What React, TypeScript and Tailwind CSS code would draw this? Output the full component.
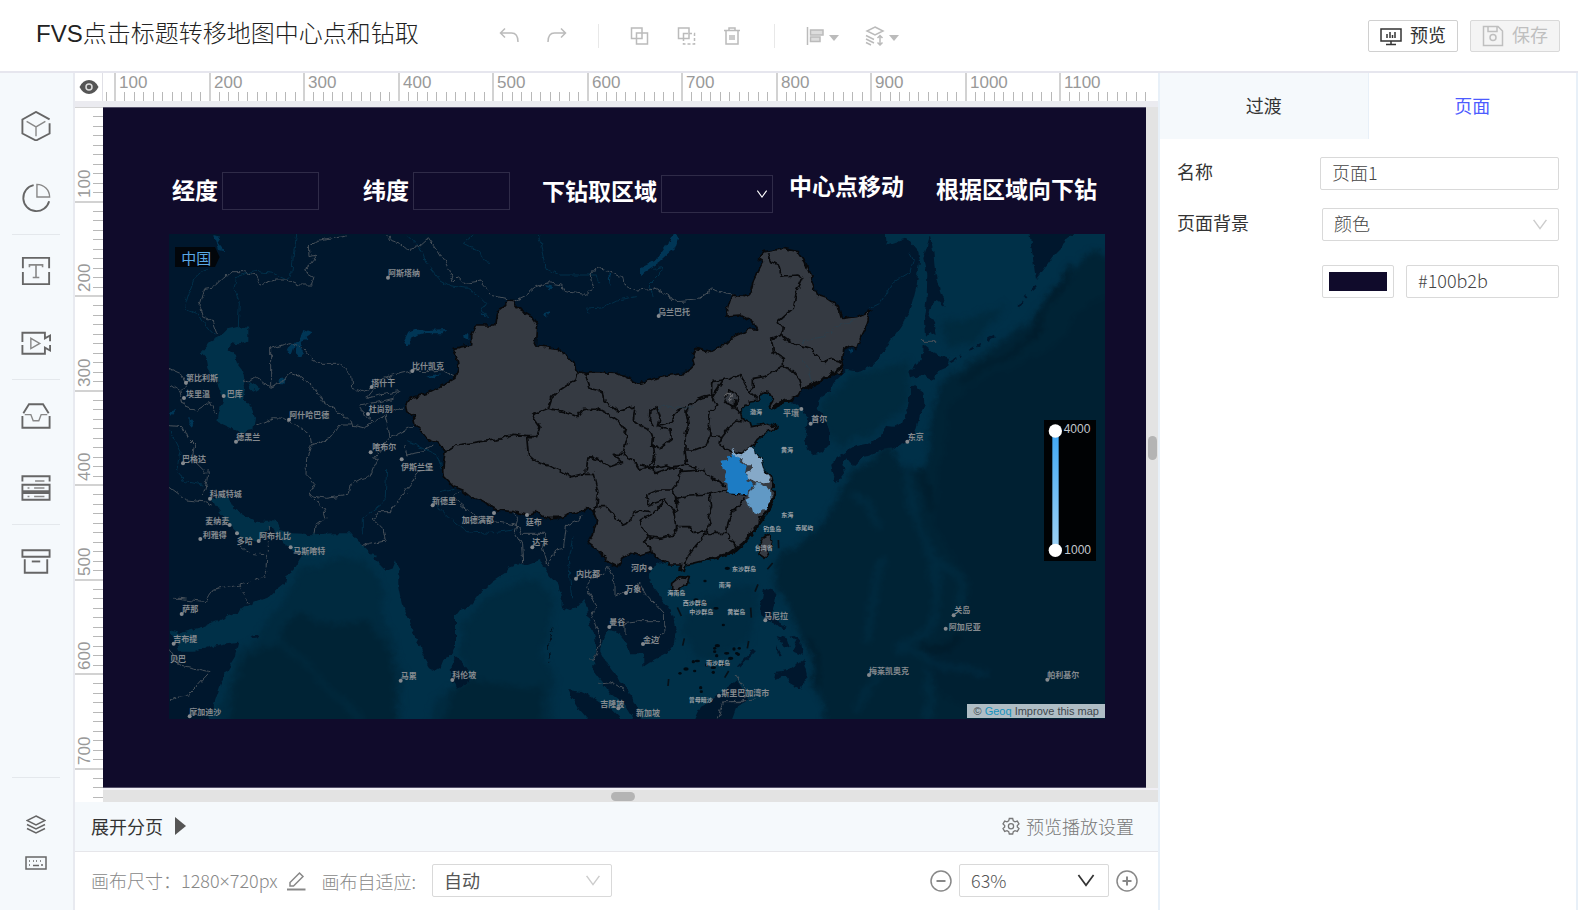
import { useState, type ReactNode } from "react"

type MapLabel = { text: string; x: number; y: number; dot?: [number, number] }

const BASEMAP_LABELS: MapLabel[] = [
  { text: "阿斯塔纳", x: 684, y: 142, dot: [684, 158] },
  { text: "比什凯克", x: 756, y: 421, dot: [757, 438] },
  { text: "塔什干", x: 634, y: 471, dot: [635, 486] },
  { text: "杜尚别", x: 626, y: 549, dot: [624, 567] },
  { text: "第比利斯", x: 78, y: 458, dot: [78, 473] },
  { text: "埃里温", x: 78, y: 506, dot: [72, 519] },
  { text: "巴库", x: 200, y: 506, dot: [191, 513] },
  { text: "阿什哈巴德", x: 388, y: 568, dot: [387, 584] },
  { text: "德黑兰", x: 229, y: 634, dot: [228, 650] },
  { text: "巴格达", x: 66, y: 699, dot: [69, 715] },
  { text: "喀布尔", x: 637, y: 664, dot: [632, 682] },
  { text: "伊斯兰堡", x: 723, y: 725, dot: [725, 703] },
  { text: "乌兰巴托", x: 1494, y: 258, dot: [1496, 273] },
  { text: "平壤", x: 1869, y: 561, dot: [1924, 552] },
  { text: "首尔", x: 1954, y: 579, dot: [1952, 596] },
  { text: "东京", x: 2243, y: 634, dot: [2242, 650] },
  { text: "科威特城", x: 149, y: 806, dot: [150, 821] },
  { text: "麦纳麦", x: 136, y: 886, dot: [209, 900] },
  { text: "利雅得", x: 128, y: 927, dot: [121, 942] },
  { text: "多哈", x: 230, y: 947, dot: [231, 925] },
  { text: "阿布扎比", x: 297, y: 931, dot: [296, 948] },
  { text: "马斯喀特", x: 400, y: 976, dot: [392, 967] },
  { text: "萨那", x: 67, y: 1149, dot: [65, 1167] },
  { text: "吉布提", x: 40, y: 1240, dot: [41, 1256] },
  { text: "贝巴", x: 30, y: 1301 },
  { text: "摩加迪沙", x: 88, y: 1459, dot: [89, 1474] },
  { text: "马累", x: 722, y: 1351, dot: [722, 1367] },
  { text: "科伦坡", x: 877, y: 1349, dot: [877, 1365] },
  { text: "新德里", x: 816, y: 827, dot: [818, 841] },
  { text: "加德满都", x: 905, y: 884, dot: [1002, 864] },
  { text: "廷布", x: 1097, y: 890, dot: [1101, 870] },
  { text: "达卡", x: 1117, y: 950, dot: [1117, 967] },
  { text: "内比都", x: 1248, y: 1045, dot: [1248, 1061] },
  { text: "河内", x: 1413, y: 1026, dot: [1471, 1030] },
  { text: "万象", x: 1396, y: 1089, dot: [1398, 1104] },
  { text: "曼谷", x: 1348, y: 1190, dot: [1348, 1206] },
  { text: "金边", x: 1449, y: 1242, dot: [1449, 1257] },
  { text: "吉隆坡", x: 1321, y: 1434, dot: [1375, 1450] },
  { text: "新加坡", x: 1428, y: 1462 },
  { text: "马尼拉", x: 1812, y: 1170, dot: [1816, 1186] },
  { text: "斯里巴加湾市", x: 1684, y: 1402, dot: [1677, 1412] },
  { text: "关岛", x: 2383, y: 1152, dot: [2381, 1171] },
  { text: "阿加尼亚", x: 2366, y: 1203, dot: [2357, 1211] },
  { text: "梅莱凯奥克", x: 2127, y: 1336, dot: [2127, 1350] },
  { text: "帕利基尔", x: 2662, y: 1349, dot: [2662, 1364] },
]

const SEA_LABELS: MapLabel[] = [
  { text: "渤海", x: 1770, y: 558 },
  { text: "黄海", x: 1863, y: 674 },
  { text: "东海", x: 1864, y: 867 },
  { text: "钓鱼岛", x: 1810, y: 909 },
  { text: "赤尾屿", x: 1906, y: 906 },
  { text: "台湾省", x: 1784, y: 967 },
  { text: "东沙群岛", x: 1716, y: 1030 },
  { text: "南海", x: 1676, y: 1078 },
  { text: "海南岛", x: 1522, y: 1101 },
  { text: "西沙群岛", x: 1568, y: 1133 },
  { text: "中沙群岛", x: 1588, y: 1159 },
  { text: "黄岩岛", x: 1702, y: 1158 },
  { text: "南沙群岛", x: 1638, y: 1312 },
  { text: "曾母暗沙", x: 1586, y: 1423 },
]

// small reefs and islands drawn as specks
const ISLETS = [
  [1608, 1125], [1618, 1140], [1632, 1132], [1668, 1150], [1650, 1162], [1690, 1200], [1672, 1262], [1664, 1280],
  [1670, 1292], [1700, 1285], [1722, 1272], [1738, 1270], [1712, 1300], [1730, 1285], [1650, 1310], [1660, 1328],
  [1600, 1310], [1604, 1338], [1578, 1332], [1560, 1345], [1640, 1320], [1690, 1320], [1622, 1388], [1624, 1400],
  [1702, 1030], [1635, 1068], [1660, 1342], [1612, 1308], [1735, 1288], [1664, 1270],
]

const CHINA =
  "M1045 228L1060 230L1075 250L1110 270L1130 300L1126 360L1190 370L1225 395L1245 415L1252 440L1275 445L1300 443L1370 445L1410 462L1440 475L1485 460L1530 450L1575 445L1605 415L1598 390L1610 370L1650 382L1700 355L1720 335L1765 315L1790 315L1778 290L1740 270L1696 273L1715 210L1750 215L1770 205L1780 170L1810 110L1795 100L1815 80L1870 70L1915 80L1935 110L1950 150L1970 210L2000 220L2035 245L2045 280L2090 275L2132 257L2120 300L2105 330L2090 370L2070 362L2048 375L2045 410L2050 435L2035 450L2015 440L2000 460L1960 480L1925 492L1915 510L1895 522L1870 535L1832 552L1825 545L1840 520L1830 503L1810 500L1795 525L1770 528L1755 548L1742 560L1745 580L1770 590L1775 605L1800 600L1820 595L1852 605L1840 615L1820 620L1795 640L1785 655L1770 670L1790 685L1805 705L1815 740L1835 755L1840 775L1835 795L1848 800L1840 825L1825 855L1810 875L1795 885L1795 905L1775 925L1755 950L1730 975L1710 985L1680 993L1640 1005L1600 1015L1575 1020L1570 1042L1560 1036L1562 1020L1530 1020L1490 1000L1475 980L1455 985L1440 990L1410 985L1385 1000L1375 1025L1345 1010L1320 980L1285 955L1300 930L1310 885L1300 860L1280 848L1280 855L1240 865L1195 880L1160 880L1125 860L1100 870L1060 860L1010 855L970 830L930 815L905 795L880 785L850 755L848 735L855 682L835 655L800 640L780 615L765 600L760 575L740 560L737 540L750 520L800 505L850 480L885 460L895 430L890 395L880 370L935 360L935 330L950 300L1005 300L1010 260L1035 240Z"

const PROVINCE_LINES = [
  // west
  "M1252 440L1245 465L1200 495L1175 520L1165 550L1115 570L1140 605L1130 635L1100 635L1060 628L1010 645L960 650L890 660L855 682",
  "M1100 635L1105 690L1130 712L1175 725L1210 742L1235 755L1275 745L1300 745L1315 805L1310 845L1340 845L1360 870L1390 900L1410 890L1420 862L1440 855L1470 860",
  "M1165 550L1210 560L1250 575L1270 550L1310 550L1340 565L1375 590L1404 630L1390 685L1360 685L1388 712L1350 725L1320 705L1285 695L1278 740",
  "M1275 445L1290 490L1330 500L1335 530L1375 560L1425 545L1420 585L1440 600L1470 615L1480 640L1478 665L1500 668L1534 640L1530 615L1495 605L1500 575L1490 545L1470 560L1468 585L1480 605",
  "M1388 690L1420 705L1440 735L1470 720L1484 690L1480 660",
  "M1310 845L1300 870",
  // north east
  "M1825 85L1835 110L1855 120L1865 153L1910 150L1928 160L1910 200L1900 250L1875 270L1852 290L1870 310L1865 330L1835 342L1840 380L1870 400L1870 425L1900 440L1915 460L1925 492",
  "M1865 330L1900 355L1950 370L1970 390L1995 415L2010 400L2045 410",
  "M1870 425L1840 440L1810 455L1780 460L1780 490L1768 500L1755 480L1740 448L1690 465L1655 470L1655 515L1670 540L1650 560L1645 600L1650 630L1640 660L1600 675L1575 675L1575 640L1585 600L1578 560L1590 540L1620 520L1655 512",
  "M1768 500L1790 520M1690 515L1710 495L1735 515L1725 545L1700 535L1690 515M1725 520L1722 550L1742 565",
  "M1578 545L1550 560L1535 590L1500 600M1650 632L1685 635L1712 600L1730 585L1750 588",
  "M1685 635L1680 660L1715 680L1745 685L1770 670",
  // centre and south
  "M1575 675L1580 720L1620 735L1560 740L1555 770L1535 795L1550 820L1590 810L1650 807L1700 795",
  "M1440 720L1480 730L1520 720L1570 738M1620 735L1650 755L1695 780",
  "M1535 795L1495 795L1460 810L1465 840L1515 825L1545 865L1550 905L1590 905L1600 925L1640 920",
  "M1550 820L1550 865M1650 807L1655 845L1645 875L1650 895L1640 925L1700 925L1720 950L1730 975",
  "M1700 800L1760 812M1750 820L1740 845L1715 860L1705 885L1700 920",
  "M1640 925L1605 965L1580 1000L1570 1020",
  "M1440 885L1450 915L1465 935L1500 940L1540 930L1550 905M1465 935L1450 950L1475 970L1475 980",
  "M1440 885L1475 870L1515 825M1655 515L1690 465",
  "M1480 690L1484 745L1540 725L1575 720",
]

const BORDER_LINES = [
  "M450 95L448 60L480 45L560 30M450 95L470 90L450 120L430 135L462 155L455 180L415 180L380 165L345 165L300 180L285 150L250 140L215 140L190 160L165 185L135 190L120 240L130 275L160 290L175 330",
  "M680 30L690 45L720 55L740 72L775 65L805 38L835 80L860 120L880 170L895 155L915 175L960 168L1000 212L1035 220L1045 228",
  "M1060 230L1100 210L1130 185L1165 173L1205 180L1215 200L1275 208L1300 185L1290 150L1310 127L1345 140L1385 155L1390 180L1430 195L1480 190L1520 210L1550 230L1610 225L1660 192L1690 205L1715 210",
  "M332 485L332 370L390 353L430 370L470 415L540 415L575 450L578 490L610 500L640 485M250 470L290 455L330 487L365 470L390 445L420 455L465 490L490 530L575 590L575 600L540 600L510 640L455 660L450 630L410 600L370 580L340 578L285 602",
  "M885 455L840 435L800 440L755 438L700 450L660 465L640 495L620 520L660 510L720 500L700 520L660 530L600 540L610 570L640 590L610 608L575 600M730 545L700 555M640 590L675 570L685 610L690 640L755 605L765 600",
  "M27 430L60 445L80 480L60 500L30 480M60 500L70 540L110 555L150 530L170 570M27 602L70 605L85 640L105 660L95 700L140 745",
  "M455 660L440 700L438 745L465 775L445 810L490 850L498 880L465 905L462 928M445 810L500 820L565 810L570 780L605 760L630 755L640 730M640 730L655 700L640 700L690 640M735 660L740 690L790 680L820 660",
  "M27 785L80 825L130 830L155 840M130 810L140 770L145 735M820 732L780 738L745 785L720 820L690 860L655 860L640 885L670 915L675 945L625 955L610 965",
  "M900 800L880 820L940 870L1000 890L1070 900M1060 860L1075 890L1065 925L1085 960L1088 1015M1070 900L1085 925L1160 925L1150 970L1165 1025L1185 975L1210 970L1220 900L1270 875",
  "M1345 1025L1330 1050L1290 1060L1280 1090L1310 1140L1295 1175L1325 1250L1300 1305L1285 1305M1345 1030L1365 1070L1365 1115L1400 1100L1440 1075L1460 1110L1510 1165L1512 1225L1490 1245M1395 1230L1395 1195L1440 1190L1500 1190",
  "M27 1270L60 1320L150 1340L85 1410L50 1415L27 1430M40 1120L60 1120L135 1130L160 1095L240 1080",
  "M2278 349L2327 349M1315 1375L1350 1370L1390 1395M1725 1350L1755 1390L1750 1430L1690 1430L1672 1480M1710 1430L1790 1425",
]

const WATER_LINES = [
  "M410 30L400 90L395 150L380 165L340 145L280 138L230 155L222 190L238 230L235 305M140 130L105 160L85 210L73 250L110 265L150 320L170 330",
  "M740 30L780 70L800 115L840 165L870 182L920 190L960 215L980 235L965 260L990 275",
  "M940 30L910 55L960 80L970 110L990 112M1135 30L1145 70L1155 130L1200 150L1260 150L1310 150L1320 175M1430 215L1370 225L1330 245L1280 250L1290 270",
  "M1480 215L1470 180L1500 150L1505 125L1480 130M2250 85L2260 105L2250 140L2200 170L2175 210L2160 235L2130 250",
  "M680 735L675 830L610 880L610 925M830 840L870 880L920 920L990 925L1060 915M840 800L880 790M1240 930L1225 1000L1230 1060L1235 1120",
  "M50 740L75 770L130 780M30 620L60 680L50 735M745 650L830 690L850 740",
]

const CITY_FONT = "font-['Noto_Sans_CJK_SC',sans-serif]"

function WorldMap() {
  return (
    <svg viewBox="27 27 2808 1455" preserveAspectRatio="none" className="block h-full w-full bg-[#00172d]" role="img" aria-label="地图">
      <defs>
        <filter id="coast" x="-5%" y="-5%" width="110%" height="110%" colorInterpolationFilters="sRGB">
          <feTurbulence type="fractalNoise" baseFrequency="0.05" numOctaves="2" seed="4" result="n" />
          <feDisplacementMap in="SourceGraphic" in2="n" scale="18" xChannelSelector="R" yChannelSelector="G" />
        </filter>
        <filter id="soft" x="-5%" y="-5%" width="110%" height="110%" colorInterpolationFilters="sRGB">
          <feTurbulence type="fractalNoise" baseFrequency="0.01" numOctaves="3" seed="8" result="n" />
          <feDisplacementMap in="SourceGraphic" in2="n" scale="50" xChannelSelector="R" yChannelSelector="G" />
          <feGaussianBlur stdDeviation="9" />
        </filter>
        <linearGradient id="range" x1="0" y1="0" x2="0" y2="1">
          <stop offset="0" stopColor="#3fa7f5" />
          <stop offset="1" stopColor="#9fd2f5" />
        </linearGradient>
        <clipPath id="seaClip">
          <path d="M27 1215L60 1225L130 1205L180 1185L245 1155L265 1140L330 1115L350 1095L375 1075L380 1050L400 1035L425 992L370 955L350 930L335 905L310 925L295 950L270 945L240 935L215 905L190 875L165 840L155 820L205 815L220 845L240 865L290 890L330 890L345 880L360 915L400 925L460 928L520 925L575 925L600 955L630 985L655 990L640 1000L675 1035L700 1025L708 1005L715 1035L715 1085L725 1135L745 1185L760 1225L775 1255L790 1295L810 1330L825 1338L845 1325L855 1300L875 1290L885 1265L885 1225L885 1175L900 1155L930 1145L960 1105L1000 1070L1040 1045L1045 1025L1075 1015L1100 1020L1140 1005L1150 1025L1170 1055L1195 1080L1205 1115L1205 1145L1230 1155L1250 1150L1270 1125L1280 1145L1290 1195L1305 1235L1310 1275L1300 1305L1300 1335L1330 1375L1350 1405L1390 1435L1430 1500L140 1500L180 1385L200 1335L225 1295L235 1250L200 1255L150 1265L100 1280L60 1280L45 1245Z" />
          <path d="M1345 1215L1320 1275L1340 1315L1370 1355L1400 1385L1420 1425L1450 1500L2860 1500L2860 0L2780 0L2720 40L2705 70L2680 95L2655 130L2628 165L2605 0L2175 0L2180 60L2240 40L2275 80L2280 110L2270 180L2250 260L2210 320L2170 380L2140 420L2100 440L2060 435L2020 475L2010 500L1980 520L1970 545L1995 580L2010 620L2010 660L1990 680L1960 688L1940 670L1935 640L1940 610L1945 580L1920 550L1895 530L1830 490L1700 540L1700 700L1600 900L1550 1000L1510 1010L1485 1025L1465 1045L1470 1075L1490 1100L1515 1135L1540 1175L1550 1215L1545 1255L1520 1285L1480 1305L1450 1325L1450 1285L1410 1285L1400 1255L1370 1220Z" />
        </clipPath>
      </defs>

      {/* sea */}
      <g filter="url(#coast)">
        <g clipPath="url(#seaClip)">
          <rect x="0" y="0" width="2870" height="1510" fill="#003048" />
          <g filter="url(#soft)">
            <path fill="#002a3f" d="M420 1025L530 1005L600 1005L640 1045L665 1095L660 1165L690 1235L715 1295L735 1375L735 1490L150 1490L210 1370L240 1275L300 1235L340 1165L400 1075Z" />
            <path fill="#002335" d="M400 1150L520 1200L620 1190L650 1240L690 1310L710 1400L715 1520L190 1520L230 1370L270 1290L360 1260Z" />
            <path fill="#002a3f" d="M950 1150L1040 1080L1140 1060L1190 1135L1160 1215L1150 1295L1180 1375L1190 1520L800 1520L830 1420L930 1375L900 1295L900 1195Z" />
            <path fill="#002436" d="M930 1340L1060 1390L1150 1380L1160 1520L850 1520L870 1420Z" />
            <path fill="#002335" d="M2900 100L2790 80L2700 180L2600 300L2440 400L2360 460L2320 540L2310 640L2300 735L2220 735L2180 640L2140 700L2080 740L2000 880L1900 970L1845 985L1840 1085L1870 1135L1920 1215L1960 1335L2000 1520L2900 1520Z" />
            <path fill="#002032" d="M2900 200L2780 240L2650 380L2430 490L2370 560L2330 900L2430 1100L2400 1200L2300 1270L2330 1400L2600 1520L2900 1520Z" />
            <path fill="#002a3e" d="M2000 520L2080 450L2140 440L2240 400L2240 470L2220 560L2140 610L2040 650L1980 600ZM2340 300L2540 240L2440 350L2370 370Z" />
            <path fill="#002b41" d="M1560 1185L1640 1115L1780 1075L1790 1175L1740 1255L1670 1295L1600 1295Z" />
            <path fill="none" stroke="#002c42" strokeWidth="22" d="M2240 740L2270 900L2320 1010L2330 1130L2310 1210L2220 1270M2330 1010L2400 1080L2410 1170M2220 1270L2350 1320L2480 1350M2130 1260L2130 1130L2170 990M2080 800L2160 920M2160 1330L2080 1460M2310 1340L2300 1500" opacity=".8" />
            <path fill="none" stroke="#001a29" strokeWidth="16" d="M2740 110L2640 290L2560 380L2400 470M2290 735L2320 860M2280 1270L2350 1255L2390 1220M1950 1250L1980 1390" />
            <path fill="none" stroke="#002c42" strokeWidth="16" d="M360 1240L480 1370L560 1440L600 1490M720 1400L720 1490" opacity=".7" />
          </g>
        </g>

        {/* inland seas and lakes */}
        <path fill="#00314a" d="M205 310L235 303L265 308L265 350L240 358L215 355L205 375L225 390L230 415L250 440L255 490L250 520L275 550L285 575L280 615L240 622L205 605L172 590L180 550L190 520L170 470L145 430L140 400L122 382L150 350L180 335Z" />
        <path fill="#00314a" d="M262 468L280 475L298 490L280 500L268 490Z" />
        <path fill="#003656" d="M430 315L455 325L440 335L445 345L425 350L425 395L410 395L405 360L395 390L383 380L400 350L420 345ZM730 350L745 320L770 310L800 318L862 315L850 325L790 325L755 335L745 368ZM912 325L925 325L925 345L915 340ZM795 455L840 445L825 460ZM1155 180L1180 185L1170 200ZM1155 265L1170 258L1160 278ZM1345 145L1352 150L1348 182ZM1540 27L1555 40L1545 70L1500 110L1440 150L1440 130L1490 105L1520 60ZM160 30L180 35L170 50L195 80L175 75ZM955 260L985 275L970 275ZM2068 370L2080 378L2072 386ZM85 575L100 595L95 608L85 595ZM27 560L48 555L35 572ZM355 462L375 460L370 475L358 475Z" />

        {/* islands */}
        <path fill="#00172d" d="M885 1295L905 1310L930 1345L920 1375L890 1388L875 1365L872 1325ZM1225 1395L1260 1400L1310 1425L1350 1450L1400 1500L1300 1500L1260 1455L1235 1415ZM275 1232L290 1229L296 1236L280 1239Z" />
        <path fill="#00172d" d="M2310 35L2320 80L2325 140L2340 200L2357 245L2330 225L2315 240L2308 270L2325 300L2330 330L2310 318L2295 335L2292 280L2300 220L2302 150L2290 100ZM2288 360L2320 385L2370 400L2365 425L2330 440L2325 467L2290 450L2265 455L2250 460L2245 440L2265 420L2285 405Z" />
        <path fill="#00172d" d="M2265 480L2290 500L2294 540L2280 570L2270 610L2250 650L2230 655L2200 670L2160 675L2130 692L2110 695L2080 722L2060 700L2050 712L2055 745L2030 775L2015 740L2010 720L2040 690L2080 665L2130 655L2160 635L2175 602L2200 605L2230 590L2240 560L2250 520L2250 490Z" />
        <path fill="#00172d" d="M1812 1090L1850 1100L1845 1135L1835 1165L1850 1190L1880 1205L1870 1215L1840 1195L1815 1185L1800 1155ZM1885 1335L1930 1305L1942 1355L1920 1392L1890 1375L1878 1350L1845 1365L1850 1340ZM1850 1230L1880 1240L1890 1270L1870 1265ZM1895 1230L1920 1245L1925 1290L1900 1280L1910 1260ZM1850 1260L1865 1290L1855 1300ZM1730 1325L1780 1272L1788 1275L1740 1325ZM1595 1500L1620 1445L1650 1430L1680 1405L1730 1365L1750 1395L1770 1425L1730 1445L1710 1500Z" />
        <path fill="none" stroke="#00172d" strokeWidth="6" strokeDasharray="20 12 8 24" d="M2372 410L2440 370L2500 335M2578 245L2590 225L2628 185" />
        <path fill="none" stroke="#00111f" strokeWidth="5" strokeDasharray="16 10" d="M1178 1205L1166 1260L1172 1310" />
      </g>

      <g fill="none" filter="url(#coast)">
        {WATER_LINES.map(d => <path key={d} d={d} stroke="#00304a" strokeWidth="3" />)}
        {BORDER_LINES.map(d => <path key={d} d={d} stroke="#465059" strokeWidth="3" />)}
        <path d="M240 1080L315 1055L322 990L270 985L235 960M240 1080L265 1140M325 905L325 980" stroke="#465059" strokeWidth="3" strokeDasharray="14 8" />
      </g>

      {/* provinces */}
      <g filter="url(#coast)" stroke="#08090b" strokeWidth="5" strokeLinejoin="round">
        <path d={CHINA} fill="#353a42" />
        <path d="M1535 1075L1560 1055L1588 1058L1580 1080L1555 1097L1535 1090ZM1830 928L1835 950L1825 985L1812 1003L1800 985L1798 965L1810 940Z" fill="#353a42" />
        {PROVINCE_LINES.map(d => <path key={d} d={d} fill="none" />)}
        <path fill="none" stroke="#78797c" strokeWidth="3" d="M1690 512L1705 500L1715 510L1708 528L1718 522" />
        <path fill="none" stroke="#2c3f4c" strokeWidth="3" d="M1495 558L1510 540L1560 550L1600 548M1925 400L1945 430L1955 475M1925 350L1990 335L2040 300L2090 285" />
        <path fill="none" strokeWidth="9" d="M1832 765L1845 785M1845 800L1838 830L1815 872L1795 900L1750 955L1710 985L1640 1005M2048 425L2015 450L1930 492M1835 550L1860 535L1895 522" />
        <path stroke="none" fill="#1d7cc4" d="M1685 710L1700 708L1702 692L1714 698L1722 682L1738 690L1742 712L1760 722L1755 745L1768 752L1762 768L1780 780L1770 790L1765 808L1735 805L1705 802L1702 775L1692 770L1698 735L1686 730Z" />
        <path stroke="none" fill="#86a9c8" d="M1713 672L1730 686L1745 688L1770 668L1790 685L1805 705L1815 740L1830 757L1822 770L1790 775L1765 762L1758 742L1776 732L1772 718L1756 718L1742 700L1722 690Z" />
        <path stroke="none" fill="#6199c5" d="M1780 782L1795 775L1825 788L1830 795L1832 825L1825 835L1824 850L1808 855L1795 870L1780 865L1776 850L1766 845L1755 825L1768 818L1768 805Z" />
      </g>
      <g fill="none" stroke="#071018" strokeWidth="5">
        <path d="M1552 1147L1564 1173M1785 1100L1794 1078M1822 1033L1838 1014M1772 1148L1774 1178M1568 1262L1573 1240M1524 1383L1526 1362M1694 1358L1706 1338M1762 1270L1766 1248M1855 945L1856 970" />
      </g>
      <g fill="#000a12">
        {ISLETS.map(([x, y], i) => <ellipse key={i} cx={x} cy={y} rx={i % 3 === 0 ? 8 : 5} ry={i % 2 === 0 ? 5 : 4} />)}
      </g>

      <g className={CITY_FONT} fontSize="24" fontWeight="700" fill="#858a8f" dominantBaseline="central">
        {BASEMAP_LABELS.map(l => (
          <g key={l.text}>
            <text x={l.x} y={l.y}>{l.text}</text>
            {l.dot && <circle cx={l.dot[0]} cy={l.dot[1]} r="6" />}
          </g>
        ))}
      </g>
      <g className={CITY_FONT} fontSize="18" fontWeight="700" fill="#9aa0a6" dominantBaseline="central">
        {SEA_LABELS.map(l => <text key={l.text} x={l.x} y={l.y}>{l.text}</text>)}
      </g>

      {/* region crumb */}
      <path d="M45 66H165L179 96L165 126H45Z" fill="#02060b" />
      <text x="64" y="97" fontSize="45" fill="#5aa9e6" dominantBaseline="central" className={CITY_FONT}>中国</text>

      {/* value range */}
      <rect x="2652" y="585" width="156" height="423" fill="#000204" />
      <rect x="2677" y="618" width="19" height="358" fill="url(#range)" />
      <g fill="#fff">
        <circle cx="2686" cy="618" r="20" />
        <circle cx="2686" cy="976" r="20" />
      </g>
      <g fontSize="36" fill="#c3c8cd" dominantBaseline="central" className="font-['Liberation_Sans',sans-serif]">
        <text x="2711" y="613">4000</text>
        <text x="2713" y="974">1000</text>
      </g>
    </svg>
  )
}

// screen pixels for one canvas pixel on the rulers
const UNIT = 0.945
const H_TICKS = Array.from({ length: 111 }, (_, i) => 90 + i * 10)
const V_TICKS = Array.from({ length: 74 }, (_, i) => i * 10)

function HorizontalRuler() {
  return (
    <svg className="h-7 min-w-0 flex-1 bg-white" role="img" aria-label="水平标尺">
      {H_TICKS.map(v => {
        const x = Math.round(12 + (v - 100) * UNIT)
        const major = v % 100 === 0
        return (
          <g key={v}>
            <rect x={major ? x - 1 : x} y={major ? 0 : 19} width={major ? 2 : 1} height={major ? 28 : 9} fill={major ? "#d2d2d2" : "#b8b8b8"} />
            {major && <text x={x + 4} y={15} fontSize="17" fill="#999" className="font-['Liberation_Sans',sans-serif]">{v}</text>}
          </g>
        )
      })}
    </svg>
  )
}

function VerticalRuler() {
  return (
    <svg className="h-full w-7 shrink-0 bg-white" role="img" aria-label="垂直标尺">
      {V_TICKS.map(v => {
        const y = Math.round(v * UNIT)
        const major = v % 100 === 0
        return (
          <g key={v}>
            <rect x={major ? 0 : 18} y={major ? y - 1 : y} width={major ? 28 : 10} height={major ? 2 : 1} fill={major ? "#d2d2d2" : "#b8b8b8"} />
            {major && v > 0 && (
              <text transform={`translate(15 ${y - 4}) rotate(-90)`} fontSize="17" fill="#999" className="font-['Liberation_Sans',sans-serif]">{v}</text>
            )}
          </g>
        )
      })}
    </svg>
  )
}

function Icon({ size = 20, width = 1.5, children }: { size?: number; width?: number; children: ReactNode }) {
  return (
    <svg width={size} height={size} viewBox={`0 0 ${size} ${size}`} fill="none" stroke="currentColor" strokeWidth={width} aria-hidden="true">
      {children}
    </svg>
  )
}

function Caret() {
  return (
    <svg width="10" height="6" viewBox="0 0 10 6" className="mt-1" aria-hidden="true">
      <path d="M0 0H10L5 6Z" fill="currentColor" />
    </svg>
  )
}

function Chevron({ className }: { className: string }) {
  return (
    <svg viewBox="0 0 16 12" fill="none" stroke="currentColor" strokeWidth="1.6" className={"pointer-events-none absolute " + className} aria-hidden="true">
      <path d="M1 1L8 10.5L15 1" />
    </svg>
  )
}

const SIDE_GROUPS: { name: string; icon: ReactNode }[][] = [
  [
    {
      name: "组件",
      icon: <><path d="M1.5 20V9L16 1L30.5 9M30.5 13V24L16 31.5L1.5 24V17" /><path d="M6 11L16 17L26 11M16 17V27" strokeWidth="1.5" stroke="#888" /></>,
    },
    {
      name: "图表",
      icon: <><path d="M13.5 2.3A14 14 0 1 0 30 19.5" /><path d="M17 1.5A13.5 13.5 0 0 1 30.5 15H17Z" strokeWidth="1.5" stroke="#888" /></>,
    },
  ],
  [
    {
      name: "文本",
      icon: <><path d="M2 13V2H30V13M2 17V30H30V17" /><path d="M9 12V9.5H23V12M16 9.5V23M12.5 23H19.5" strokeWidth="1.7" stroke="#888" /></>,
    },
    {
      name: "媒体",
      icon: <><path d="M1.5 15V5H25.5V11L31 8V14M1.5 18V27.5H25.5V21L31 24V18" /><path d="M10.5 11V22L20 16.5Z" strokeWidth="1.5" stroke="#888" /></>,
    },
  ],
  [
    {
      name: "素材",
      icon: <><path d="M2.5 13L8.5 3.5H23.5L29.5 13M1.5 16V28.5H30.5V16" /><path d="M4 14.5H10.5L13 21H19L21.5 14.5H28" strokeWidth="1.5" stroke="#888" /></>,
    },
    {
      name: "数据",
      icon: <><path d="M1.5 9V3.5H30.5V9M1.5 12.5H30.5V19.5H1.5ZM1.5 21.5H30.5V28.5H1.5Z" /><path d="M15 8.5H25M7 16H9M14 16H25M7 25H9M14 25H25" strokeWidth="1.5" stroke="#888" /></>,
    },
  ],
  [
    {
      name: "收纳",
      icon: <><path d="M1.5 4.5H30.5V11.5H1.5ZM4 14V28.5H28V14" /><path d="M11.5 16.5H20.5" /></>,
    },
  ],
]

function Sidebar() {
  return (
    <nav className="flex w-[75px] shrink-0 flex-col items-center border-r-2 border-[#e8eaf0] bg-[#f5f9fc] pt-[17px] pr-px pb-7 text-[#666]">
      {SIDE_GROUPS.map((group, i) => (
        <div key={i} className={i === 0 ? "flex flex-col" : "flex flex-col border-t border-[#e4e8ec]"}>
          {group.map(item => (
            <button key={item.name} title={item.name} className="flex h-[72px] w-12 items-center justify-center">
              <Icon size={30} width={2}><g transform="scale(.9375)">{item.icon}</g></Icon>
            </button>
          ))}
        </div>
      ))}
      <div className="mt-auto flex w-12 flex-col items-center border-t border-[#e4e8ec] pt-7">
        <button title="图层" className="flex h-[38px] items-center">
          <Icon size={20}><path d="M10 1L19 5.5L10 10L1 5.5ZM1 9.5L10 14L19 9.5M1 13.5L10 18L19 13.5" /></Icon>
        </button>
        <button title="快捷键" className="flex h-[38px] items-center">
          <Icon size={22}>
            <path d="M1 5H21V17H1Z" />
            <path d="M4 9H5M8 9H9M11 9H12M15 9H16M4 13H5M8 13.5H14M16 13H18" />
          </Icon>
        </button>
      </div>
    </nav>
  )
}

function Header() {
  return (
    <header className="flex h-[73px] shrink-0 items-center border-b-2 border-[#e6e6ee] bg-white pr-[18px] pl-9">
      <h1 className="w-[463px] pb-1 font-['Liberation_Sans','Noto_Sans_CJK_SC',sans-serif] text-2xl font-light whitespace-nowrap text-[#222]">FVS点击标题转移地图中心点和钻取</h1>
      <div className="flex items-center text-[#bbb]">
        <button title="撤销" className="mr-7"><Icon><path d="M6 2.5L1.500 7L6 11.5M1.5 7H12.500Q19 7 19 16" /></Icon></button>
        <button title="重做" className="mr-[31px]"><Icon><path d="M14 2.5L18.5 7L14 11.5M18.5 7H7.500Q1 7 1 16" /></Icon></button>
        <span className="mr-[30px] h-6 w-px bg-[#e8e8e8]" />
        <button title="复制" className="mr-[27px]"><Icon><path d="M2.5 2H13V12.5H2.5ZM7.5 7H18.5V18H7.5Z" /></Icon></button>
        <button title="剪切" className="mr-[26px]"><Icon><path d="M2.5 2H13V12.5H2.5Z" /><path d="M13 7.5H18.5V18H7.5V13" strokeDasharray="3 2" /><path d="M7.5 12V7.5H12" /></Icon></button>
        <button title="删除" className="mr-8"><Icon><path d="M2 4.5H18M7 4V2H13V4M4 5V18H16V5M8 9V14M10 9V14M12 9V14" /></Icon></button>
        <span className="mr-[30px] h-6 w-px bg-[#e8e8e8]" />
        <button title="对齐" className="mr-[26px] flex items-center gap-1">
          <Icon><path d="M2.5 1V19" /><path d="M5.5 4H18V9H5.500ZM5.5 11H15V15.5H5.500Z" fill="#ddd" /></Icon>
          <Caret />
        </button>
        <button title="层级" className="flex items-center gap-1">
          <Icon><path d="M10 1L18 5L10 9L2 5ZM1 9.5L9 13.5M1 13L9 17M1 16.5L6 19M15 10V18.5M12.5 12L15 9.5L17.5 12M12.5 16.5L15 19L17.5 16.5" /></Icon>
          <Caret />
        </button>
      </div>
      <div className="ml-auto flex gap-3 text-lg">
        <button className="flex h-8 w-[90px] items-center justify-center gap-2 rounded-xs border border-[#d0d0d0] text-[#333]">
          <Icon size={22}><path d="M1 4H21V16H1ZM11 16V19M6 19.5H16M7 9V13M10 7V13M12.5 10V13M15 7V13" /></Icon>
          <span className="pb-[3px]">预览</span>
        </button>
        <button disabled className="flex h-8 w-[90px] items-center justify-center gap-2 rounded-xs border border-[#d9d9d9] bg-[#f4f4f4] text-[#bfbfbf]">
          <Icon size={22}><path d="M1.5 1.5H16L20.5 6V20.5H1.5ZM6 2V6.5H15V2" /><circle cx="11" cy="12.5" r="3" /></Icon>
          <span className="pb-[3px]">保存</span>
        </button>
      </div>
    </header>
  )
}

const FIELD = "h-[38px] border border-[#2f2b48] bg-transparent text-white"

function Canvas() {
  const [longitude, setLongitude] = useState("")
  const [latitude, setLatitude] = useState("")

  return (
    <main className="relative min-w-0 flex-1 overflow-hidden border-y border-[#55516a] bg-[#100b2b] text-[23px] leading-8 font-bold text-white">
      <div className="absolute top-[64px] left-[69px] flex items-center gap-1">
        <label htmlFor="longitude" className="pb-1">经度</label>
        <input id="longitude" value={longitude} onChange={e => setLongitude(e.target.value)} className={FIELD + " w-[97px]"} />
      </div>
      <div className="absolute top-[64px] left-[260px] flex items-center gap-1">
        <label htmlFor="latitude" className="pb-1">纬度</label>
        <input id="latitude" value={latitude} onChange={e => setLatitude(e.target.value)} className={FIELD + " w-[97px]"} />
      </div>
      <div className="absolute top-[66px] left-[439px] flex items-center gap-1">
        <label htmlFor="region" className="pb-2">下钻取区域</label>
        <div className="relative flex items-center">
          <select id="region" className={FIELD + " w-[112px] appearance-none"}>
            <option value=""></option>
          </select>
          <Chevron className="right-[5px] h-2 w-3" />
        </div>
      </div>
      <button className="absolute top-[61px] left-[686px]">中心点移动</button>
      <button className="absolute top-[64px] left-[833px]">根据区域向下钻</button>

      <section className="absolute top-[126px] left-[66px] h-[485px] w-[936px] font-normal">
        <WorldMap />
        <p className="absolute right-0 bottom-px bg-[#afbdc5] px-[6px] font-['Liberation_Sans',sans-serif] text-[11px] leading-[14px] text-[#3f484d]">
          © <a href="#geoq" className="text-[#1691bd]">Geoq</a> <a href="#improve">Improve this map</a>
        </p>
      </section>
    </main>
  )
}

function Editor() {
  return (
    <div className="flex min-w-0 flex-1 flex-col">
      <div className="flex h-[34px] shrink-0 border-b-[6px] border-[#ebebf0] bg-white pr-1">
        <button title="显示标尺" className="flex w-7 shrink-0 items-center justify-center border-r border-[#e0e0e6] text-[#555]">
          <svg width="20" height="16" viewBox="0 0 20 16" aria-hidden="true">
            <path d="M0.5 8Q4 1 10 1T19.5 8Q16 15 10 15T0.5 8Z" fill="currentColor" />
            <circle cx="10" cy="8" r="3" fill="none" stroke="#ddd" strokeWidth="1.5" />
          </svg>
        </button>
        <HorizontalRuler />
      </div>
      <div className="flex min-h-0 flex-1">
        <VerticalRuler />
        <div className="flex min-w-0 flex-1 flex-col">
          <div className="flex min-h-0 flex-1">
            <Canvas />
            <div className="flex w-3 shrink-0 items-center justify-center bg-[#e3e3e3]">
              <div className="h-6 w-[9px] rounded-full bg-[#b4b4b4]" />
            </div>
          </div>
          <div className="flex h-[14px] shrink-0 items-center justify-center border-t-2 border-[#f0eff5] bg-[#e3e3e3] pr-4">
            <div className="h-[9px] w-6 rounded-full bg-[#b4b4b4]" />
          </div>
        </div>
      </div>

      <div className="flex h-[50px] shrink-0 items-center justify-between border-b border-[#e6e6ea] bg-[#f5f9fc] pr-6 pb-[2px] pl-4 text-lg">
        <button className="flex items-center gap-3 text-[#333]">
          展开分页
          <svg width="11" height="18" viewBox="0 0 11 18" aria-hidden="true"><path d="M0 0L11 9L0 18Z" fill="#555" /></svg>
        </button>
        <button className="flex items-center gap-[6px] font-light text-[#777]">
          <Icon size={18} width={1.3}>
            <path d="M7.3 1.5H10.7L11.3 3.8L13 4.8L15.3 4.1L17 7L15.3 8.6V9.9L17 11.5L15.3 14.4L13 13.7L11.3 14.7L10.7 17H7.3L6.7 14.7L5 13.7L2.7 14.4L1 11.5L2.7 9.900V8.6L1 7L2.7 4.1L5 4.8L6.7 3.8Z" />
            <circle cx="9" cy="9.2" r="2.600" />
          </Icon>
          预览播放设置
        </button>
      </div>

      <footer className="flex h-[58px] shrink-0 items-center bg-white pr-5 pb-px pl-4 text-lg font-light text-[#888]">
        <span className="whitespace-nowrap">画布尺寸：1280<span className="font-['Noto_Sans',sans-serif]">×</span>720px</span>
        <button title="编辑尺寸" className="ml-2">
          <Icon><path d="M1 18.5H19.5" strokeWidth="2" /><path d="M4 11.5L13.5 2L17 5.5L7.5 15H4Z" /></Icon>
        </button>
        <label htmlFor="fit" className="ml-4 whitespace-nowrap">画布自适应:</label>
        <div className="relative ml-4 flex w-[180px] items-center">
          <select id="fit" className="h-[33px] w-full appearance-none rounded-xs border border-[#d9d9d9] bg-white pb-[2px] pl-[11px] font-normal text-[#555]">
            <option>自动</option>
          </select>
          <Chevron className="right-[11px] h-[11px] w-4 text-[#ccc]" />
        </div>
        <div className="ml-auto flex items-center gap-[7px]">
          <button title="缩小"><Icon size={22}><circle cx="11" cy="11" r="10" /><path d="M6.5 11H15.5" strokeWidth="2" /></Icon></button>
          <div className="relative flex w-[150px] items-center">
            <select aria-label="缩放" className="h-[33px] w-full appearance-none rounded-xs border border-[#d9d9d9] bg-white pb-[2px] pl-[11px] text-[#555]">
              <option>63%</option>
            </select>
            <Chevron className="right-[13px] h-[13px] w-5 text-[#333]" />
          </div>
          <button title="放大"><Icon size={22}><circle cx="11" cy="11" r="10" /><path d="M6.5 11H15.5M11 6.5V15.5" strokeWidth="2" /></Icon></button>
        </div>
      </footer>
    </div>
  )
}

const PANEL_FIELD = "h-[33px] rounded-xs border border-[#d9d9d9] bg-white px-[11px] pb-[3px] font-light text-[#444]"

function PagePanel() {
  const [name, setName] = useState("页面1")
  const [color, setColor] = useState("#100b2b")

  return (
    <aside className="flex w-[420px] shrink-0 flex-col border-r-2 border-l-2 border-[#e8f0f8] bg-white text-lg text-[#333]">
      <div className="flex h-[66px]">
        <button className="flex-1 border-r border-[#e8f0f8] bg-[#f5f9fc] pb-[2px]">过渡</button>
        <button className="flex-1 pb-[2px] text-[#4d5bff]">页面</button>
      </div>
      <div className="flex flex-col px-[17px] pt-[18px]">
        <div className="flex items-start justify-between">
          <label htmlFor="page-name">名称</label>
          <input id="page-name" value={name} onChange={e => setName(e.target.value)} className={PANEL_FIELD + " w-[239px]"} />
        </div>
        <div className="mt-[18px] flex items-start justify-between">
          <label htmlFor="page-bg">页面背景</label>
          <div className="relative flex w-[237px] items-center">
            <select id="page-bg" className={PANEL_FIELD + " w-full appearance-none"}>
              <option>颜色</option>
            </select>
            <Chevron className="right-[11px] h-[11px] w-4 text-[#ccc]" />
          </div>
        </div>
        <div className="mt-6 flex justify-end gap-3">
          <button title="选择颜色" className="h-[33px] w-[72px] rounded-xs border border-[#d9d9d9] p-[6px]">
            <span className="block h-full w-full" style={{ backgroundColor: color }} />
          </button>
          <input aria-label="颜色值" value={color} onChange={e => setColor(e.target.value)} className={PANEL_FIELD + " w-[153px]"} />
        </div>
      </div>
    </aside>
  )
}

export default function App() {
  return (
    <div className="flex h-screen flex-col bg-white font-['Noto_Sans_CJK_SC',sans-serif]">
      <Header />
      <div className="flex min-h-0 flex-1">
        <Sidebar />
        <Editor />
        <PagePanel />
      </div>
    </div>
  )
}
